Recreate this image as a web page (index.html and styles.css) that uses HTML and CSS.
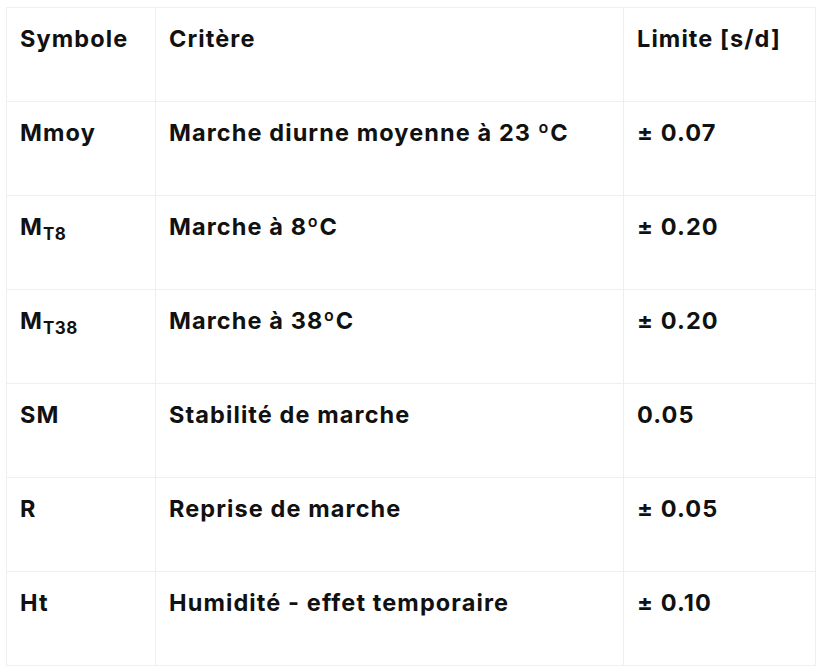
FILE: index.html
```html
<!DOCTYPE html>
<html lang="fr">
<head>
<meta charset="utf-8">
<link rel="stylesheet" href="styles.css">
</head>
<body>
<table class="spec">
  <thead>
    <tr><th class="c1">Symbole</th><th class="c2">Critère</th><th class="c3">Limite [s/d]</th></tr>
  </thead>
  <tbody>
    <tr><td>Mmoy</td><td>Marche diurne moyenne à 23 ºC</td><td>± 0.07</td></tr>
    <tr><td>M<sub>T8</sub></td><td>Marche à 8ºC</td><td>± 0.20</td></tr>
    <tr><td>M<sub>T38</sub></td><td>Marche à 38ºC</td><td>± 0.20</td></tr>
    <tr><td>SM</td><td>Stabilité de marche</td><td>0.05</td></tr>
    <tr><td>R</td><td>Reprise de marche</td><td>± 0.05</td></tr>
    <tr><td>Ht</td><td>Humidité - effet temporaire</td><td>± 0.10</td></tr>
  </tbody>
</table>
</body>
</html>
```
FILE: styles.css
```css
html, body { margin: 0; padding: 0; background: #fff; }
body { padding: 7px 6px; }
.spec {
  border-collapse: collapse;
  width: 810px;
  font-family: "Inter", "Liberation Sans", sans-serif;
  font-weight: 700;
  font-size: 23.5px;
  letter-spacing: 1.1px;
  color: #111;
}
.spec th, .spec td {
  border: 1px solid #efefef;
  text-align: left;
  vertical-align: top;
  padding: 15px 12px 0 13px;
  height: 78px;
  line-height: 32px;
  font-weight: 700;
}
.c1 { width: 123px; }
.c2 { width: 442px; }
sub { font-size: 17px; vertical-align: -5px; line-height: 0; letter-spacing: 0.5px; }
```
